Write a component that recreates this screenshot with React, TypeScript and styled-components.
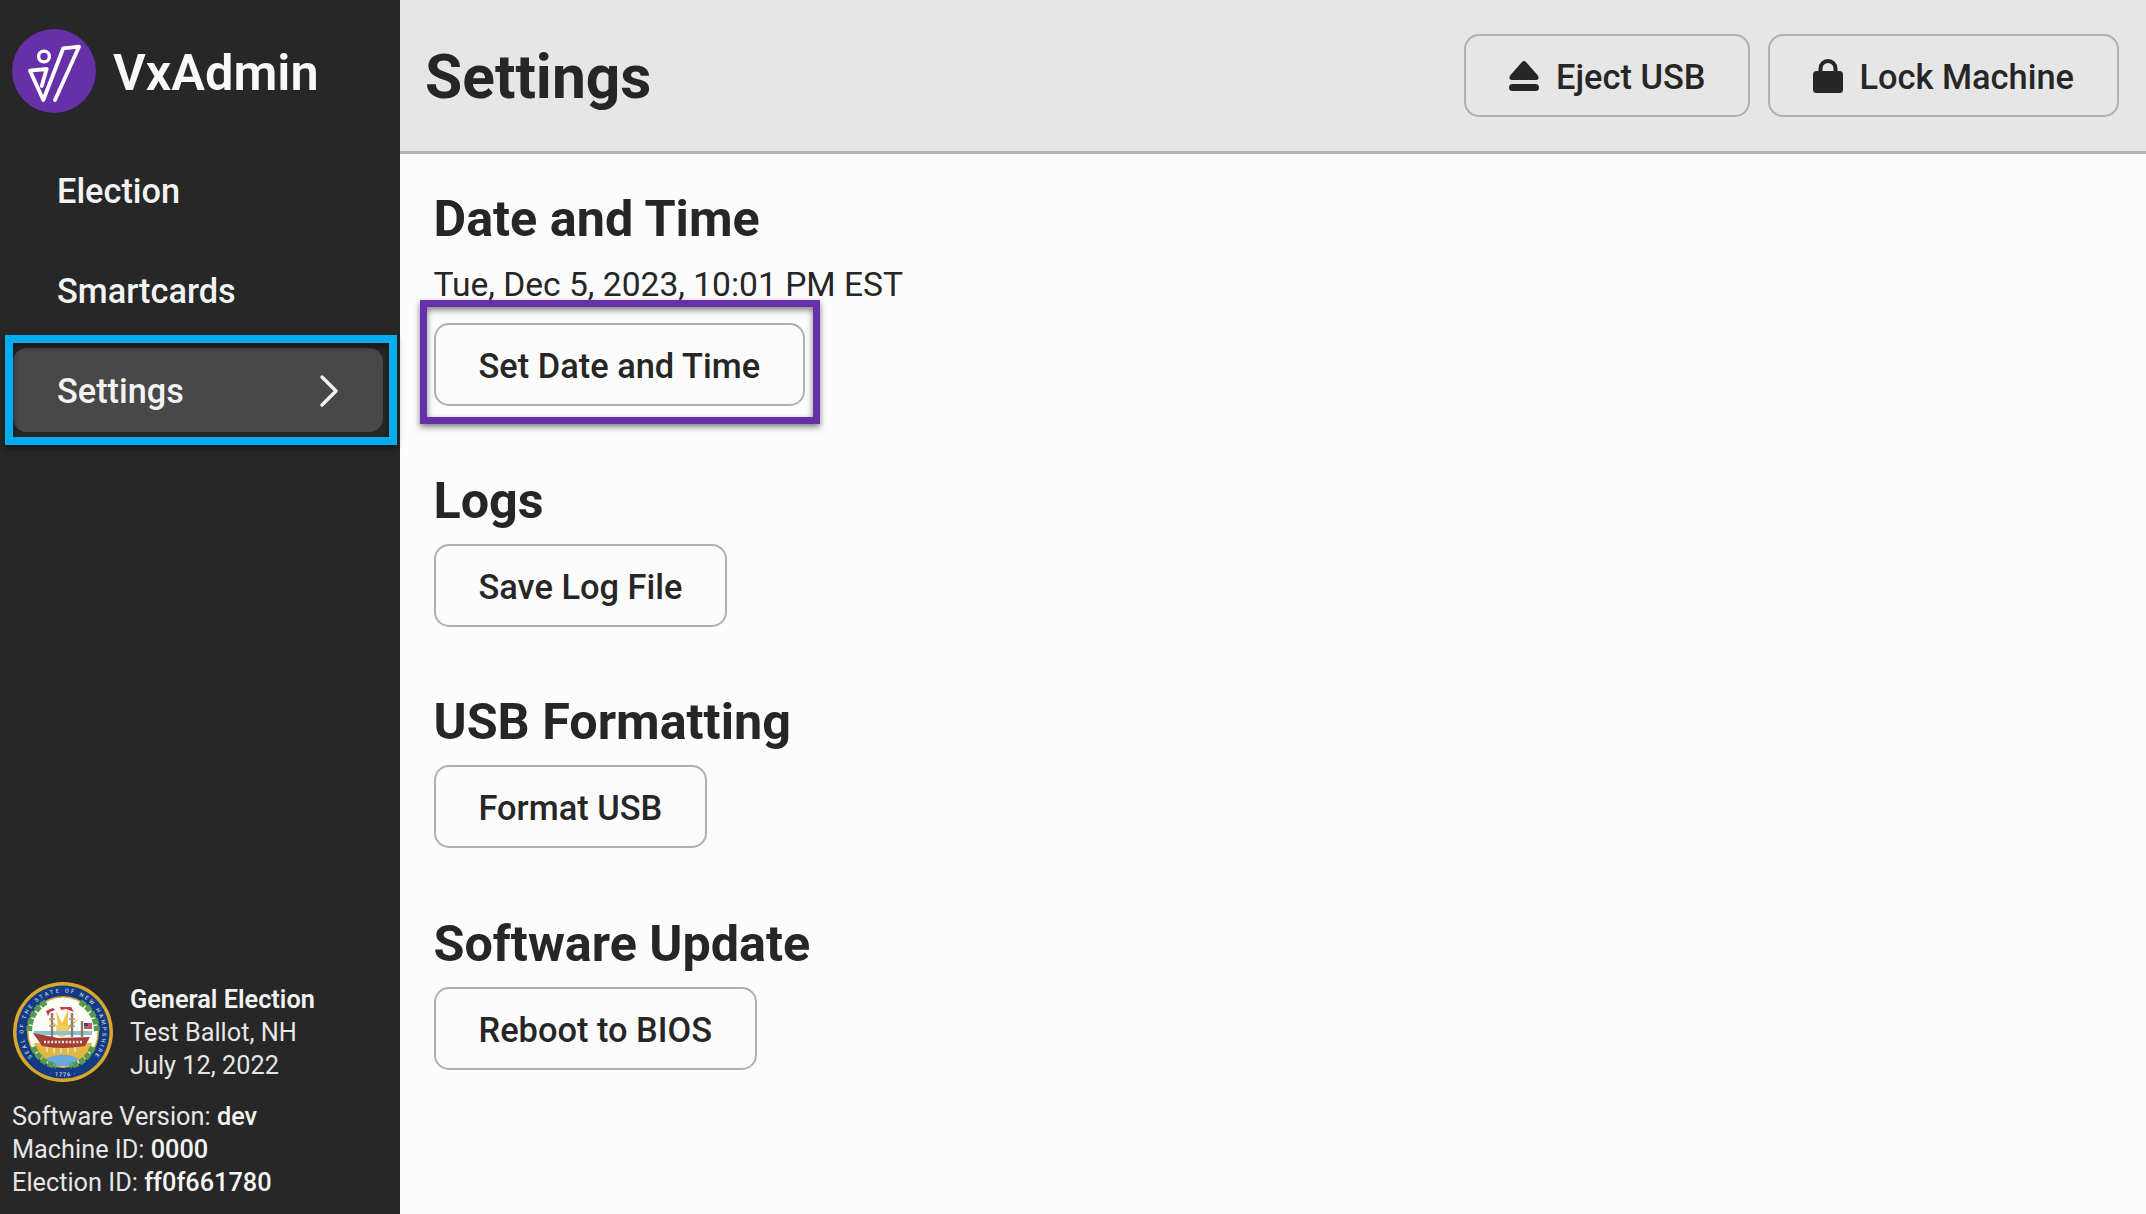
import React from "react";
import styled, { createGlobalStyle } from "styled-components";

const Global = createGlobalStyle`
  html, body { margin: 0; padding: 0; height: 100%; }
  body { font-family: Roboto, "Liberation Sans", sans-serif; background: #fbfcfb; color: #262626; }
`;

const Screen = styled.div`
  display: flex;
  width: 2146px;
  height: 1214px;
  overflow: hidden;
`;

const Sidebar = styled.aside`
  width: 400px;
  flex: none;
  background: #262726;
  color: #f3f3f3;
  display: flex;
  flex-direction: column;
  box-sizing: border-box;
  padding: 29px 0 0;
`;

const Brand = styled.div`
  display: flex;
  align-items: center;
  gap: 17px;
  padding-left: 12px;
  height: 84px;
`;

const BrandName = styled.div`
  font-size: 50.5px;
  font-weight: 600;
  color: #f8f8f8;
  line-height: 1;
  margin-top: 4px;
`;

const Nav = styled.nav`
  display: flex;
  flex-direction: column;
  gap: 16px;
  margin-top: 35px;
  padding: 0 17px 0 13px;
`;

const NavItem = styled.div<{ $active?: boolean }>`
  position: relative;
  height: 84px;
  box-sizing: border-box;
  padding: 2px 44px 0;
  display: flex;
  align-items: center;
  justify-content: space-between;
  font-size: 34.3px;
  font-weight: 500;
  border-radius: 14px;
  background: ${(p) => (p.$active ? "#484848" : "transparent")};
`;

const FocusRing = styled.div`
  position: absolute;
  left: -8px;
  right: -14px;
  top: -13px;
  bottom: -13px;
  border: 8px solid #00aeef;
  box-shadow: 0 3px 6px rgba(0, 0, 0, 0.5), inset 0 3px 6px rgba(0, 0, 0, 0.5);
  pointer-events: none;
`;

const SidebarFooter = styled.div`
  margin-top: auto;
  padding: 0 12px 15px;
  font-size: 25.3px;
  line-height: 33px;
  color: #e6e6e6;
`;

const ElectionRow = styled.div`
  display: flex;
  align-items: center;
  gap: 16px;
  margin-bottom: 17px;
`;

const ElectionTitle = styled.div`
  font-weight: 600;
  color: #f3f3f3;
`;

const Strong = styled.span`
  font-weight: 500;
  color: #f5f5f5;
`;

const Main = styled.main`
  flex: 1;
  min-width: 0;
  display: flex;
  flex-direction: column;
`;

const Header = styled.header`
  height: 154px;
  flex: none;
  box-sizing: border-box;
  background: #e5e6e5;
  border-bottom: 3px solid #b4b4b4;
  display: flex;
  align-items: center;
  justify-content: space-between;
  padding: 0 27px 0 25px;
`;

const PageTitle = styled.h1`
  margin: 6px 0 0;
  font-size: 60.5px;
  font-weight: 700;
  line-height: 1;
`;

const HeaderActions = styled.div`
  display: flex;
  gap: 18px;
`;

const Button = styled.button<{ $wide?: boolean }>`
  height: 83px;
  box-sizing: border-box;
  padding: 3px 43px 0;
  display: inline-flex;
  align-items: center;
  gap: ${(p) => (p.$wide ? "17px" : "16px")};
  background: transparent;
  border: 2px solid #b0b0b0;
  border-radius: 15px;
  color: #262626;
  font-family: inherit;
  font-size: 34.4px;
  font-weight: 500;
`;

const Content = styled.div`
  padding: 0 33.5px;
  display: flex;
  flex-direction: column;
`;

const Section = styled.section`
  margin-top: 64.2px;
  display: flex;
  flex-direction: column;
  align-items: flex-start;
  &:first-child {
    margin-top: 34px;
  }
`;

const SectionTitle = styled.h2`
  margin: 1px 0 13px;
  font-size: 50.3px;
  font-weight: 700;
  line-height: 60px;
`;

const DateText = styled.div`
  margin-top: 3px;
  margin-bottom: 18px;
  font-size: 33.6px;
  line-height: 40px;
`;

const Focused = styled.div`
  position: relative;
`;

const FocusBox = styled.div`
  position: absolute;
  left: -14px;
  right: -15px;
  top: -23px;
  bottom: -18px;
  border: 7px solid #6630a8;
  box-shadow: 0 3px 6px rgba(0, 0, 0, 0.5), inset 0 3px 6px rgba(0, 0, 0, 0.5);
  pointer-events: none;
`;

const Logo = () => (
  <svg width="84" height="84" viewBox="0 0 84 84" style={{ flex: "none" }}>
    <circle cx="42" cy="42" r="42" fill="#6630a8" />
    <circle cx="32" cy="27.5" r="5.4" fill="none" stroke="#fff" strokeWidth="3.4" />
    <path
      d="M29.7 57 L34.7 40 L18 41.7 L31.3 71 L51.3 19.3 L67 17.7 L43 71"
      fill="none"
      stroke="#fff"
      strokeWidth="3.8"
      strokeLinecap="round"
      strokeLinejoin="round"
    />
  </svg>
);

const Seal = () => (
  <svg width="102" height="102" viewBox="0 0 102 102" style={{ flex: "none" }}>
    <defs>
      <path id="sealRing" d="M20.5 76 A39.5 39.5 0 1 1 81.5 76" />
      <path id="sealBottom" d="M20 83 A44 44 0 0 0 82 83" />
    </defs>
    <circle cx="51" cy="51" r="50" fill="#d6a92c" />
    <circle cx="51" cy="51" r="46.5" fill="#143a86" />
    <circle cx="51" cy="51" r="36" fill="#d6a92c" />
    <circle cx="51" cy="51" r="34.5" fill="#fcfcf6" />
    <text fontSize="5.6" fontFamily="Roboto, sans-serif" fontWeight="500" fill="#c9cfd8">
      <textPath href="#sealRing" textLength="176">SEAL OF THE STATE OF NEW HAMPSHIRE</textPath>
    </text>
    <text fontSize="5.8" fontFamily="Roboto, sans-serif" fontWeight="500" fill="#d8d8c8" letterSpacing="1" textAnchor="middle">
      <textPath href="#sealBottom" startOffset="50%">· 1776 ·</textPath>
    </text>
    {/* sun and rays */}
    <path d="M50 52 L36 38 L46 45 L44 30 L50 42 L56 29 L56 45 L67 37 L54 52Z" fill="#f0c64e" />
    <circle cx="50" cy="50" r="6" fill="#f4cf5c" />
    <rect x="22" y="50" width="58" height="4" fill="#8cc0d8" />
    {/* masts and sails */}
    <path d="M40 56 V32 M60 56 V32 M70 56 V40" stroke="#8a7e66" strokeWidth="2.4" />
    <path d="M37 38 H43 M37 45 H43 M57 38 H63 M57 45 H63" stroke="#a89a78" strokeWidth="1.4" />
    {/* banners */}
    <path d="M34 30 L41 27 L43 29 L38 31 L36 35Z M48 26 L59 26 L62 31 L54 28 L49 29Z" fill="#c73a48" />
    {/* flag */}
    <path d="M72 42 H80 V48 H72Z" fill="#c4585c" />
    <rect x="72" y="42" width="4" height="3" fill="#2c4a92" />
    {/* land and water */}
    <path d="M22 62 H80 Q78 74 70 80 H32 Q24 74 22 62Z" fill="#e3b744" />
    <path d="M33 78 Q50 70 66 77 L62 85 H40Z" fill="#67abdc" />
    {/* hull */}
    <path d="M21 52 L46 57 L78 56 L73 65 Q50 69 30 65Z" fill="#a33f36" />
    <path d="M32 61 L70 61" stroke="#f2e6d4" strokeWidth="2.4" strokeDasharray="2 1.6" />
    <path d="M35 66 V71 M42 67 V72 M49 67 V72 M56 67 V72 M63 66 V71" stroke="#f2e6d4" strokeWidth="1.4" />
    {/* laurel wreath */}
    <path d="M34 21 Q18 30 17 50" fill="none" stroke="#4f9a54" strokeWidth="6" strokeDasharray="6 1.5" />
    <path d="M68 21 Q84 30 85 50" fill="none" stroke="#4f9a54" strokeWidth="6" strokeDasharray="6 1.5" />
    <path d="M21 66 Q28 82 44 85" fill="none" stroke="#4f9a54" strokeWidth="6" strokeDasharray="6 1.5" />
    <path d="M81 66 Q74 82 58 85" fill="none" stroke="#4f9a54" strokeWidth="6" strokeDasharray="6 1.5" />
  </svg>
);

const Chevron = () => (
  <svg width="20" height="34" viewBox="0 0 20 34">
    <path d="M3 3 L17 17 L3 31" fill="none" stroke="#f3f3f3" strokeWidth="3.4" strokeLinecap="round" strokeLinejoin="round" />
  </svg>
);

const EjectIcon = () => (
  <svg width="30" height="30" viewBox="0 0 30 30" style={{ marginTop: -3 }}>
    <path d="M15 0 Q16.2 0 17 1 L28.5 14 Q31.5 19 26 19 H4 Q-1.5 19 1.5 14 L13 1 Q13.8 0 15 0Z" fill="#262626" />
    <rect x="0" y="23" width="30" height="7" rx="3.5" fill="#262626" />
  </svg>
);

const LockIcon = () => (
  <svg width="30" height="34" viewBox="0 0 30 34" style={{ marginTop: -3 }}>
    <path d="M7.5 14 V9.5 a7.5 7.5 0 0 1 15 0 V14" fill="none" stroke="#262626" strokeWidth="4" />
    <rect x="0" y="12" width="30" height="22" rx="3.5" fill="#262626" />
  </svg>
);

export default function App() {
  return (
    <Screen>
      <Global />
      <Sidebar>
        <Brand>
          <Logo />
          <BrandName>VxAdmin</BrandName>
        </Brand>
        <Nav>
          <NavItem>Election</NavItem>
          <NavItem>Smartcards</NavItem>
          <NavItem $active>
            Settings
            <Chevron />
            <FocusRing />
          </NavItem>
        </Nav>
        <SidebarFooter>
          <ElectionRow>
            <Seal />
            <div>
              <ElectionTitle>General Election</ElectionTitle>
              <div>Test Ballot, NH</div>
              <div>July 12, 2022</div>
            </div>
          </ElectionRow>
          <div>Software Version: <Strong>dev</Strong></div>
          <div>Machine ID: <Strong>0000</Strong></div>
          <div>Election ID: <Strong>ff0f661780</Strong></div>
        </SidebarFooter>
      </Sidebar>
      <Main>
        <Header>
          <PageTitle>Settings</PageTitle>
          <HeaderActions>
            <Button $wide><EjectIcon />Eject USB</Button>
            <Button><LockIcon />Lock Machine</Button>
          </HeaderActions>
        </Header>
        <Content>
          <Section>
            <SectionTitle>Date and Time</SectionTitle>
            <DateText>Tue, Dec 5, 2023, 10:01 PM EST</DateText>
            <Focused>
              <Button>Set Date and Time</Button>
              <FocusBox />
            </Focused>
          </Section>
          <Section>
            <SectionTitle>Logs</SectionTitle>
            <Button>Save Log File</Button>
          </Section>
          <Section>
            <SectionTitle>USB Formatting</SectionTitle>
            <Button>Format USB</Button>
          </Section>
          <Section>
            <SectionTitle>Software Update</SectionTitle>
            <Button>Reboot to BIOS</Button>
          </Section>
        </Content>
      </Main>
    </Screen>
  );
}
